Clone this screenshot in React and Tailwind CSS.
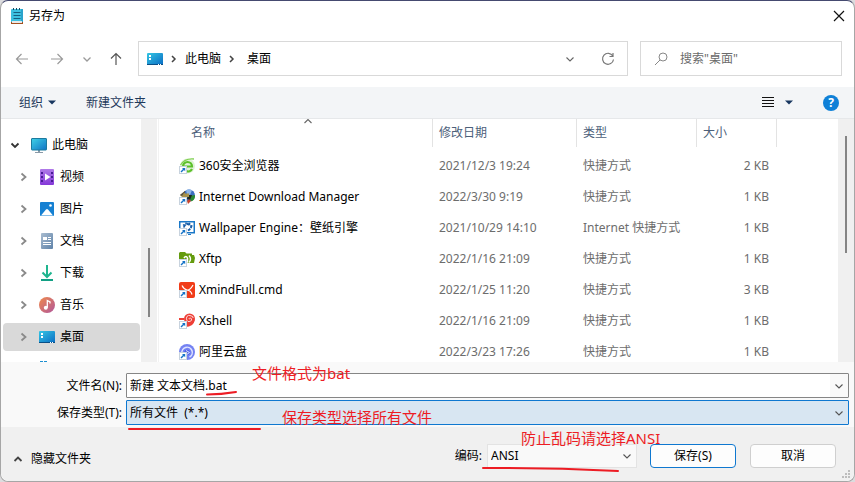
import React from "react";

function NotepadIcon() {
  return (
    <svg width="14" height="18" viewBox="0 0 14 18" aria-hidden="true">
      <rect x="1" y="2" width="12" height="14" rx="1" fill="#3cc0e0" />
      <rect x="11" y="2" width="2" height="14" fill="#2aa3cc" />
      <rect x="1" y="15" width="12" height="2" fill="#a4501e" />
      <rect x="2" y="14" width="10" height="2" fill="#e8e8e8" />
      <path d="M3.5 5.5h7M3.5 8.5h7M3.5 11.5h7" stroke="#155f80" />
      <path d="M3.5 1v2M6.5 1v2M9.5 1v2" stroke="#17485e" />
    </svg>
  );
}

function DesktopIcon() {
  return (
    <svg width="16" height="16" viewBox="0 0 16 16" aria-hidden="true">
      <defs>
        <linearGradient id="desk" x1="0" y1="0" x2="1" y2="1">
          <stop offset="0" stopColor="#35c6e3" />
          <stop offset="1" stopColor="#0a6cc4" />
        </linearGradient>
      </defs>
      <rect y="2" width="16" height="12" rx="1" fill="url(#desk)" />
      <rect y="13" width="16" height="1" fill="#0a4f86" />
      <path d="M2 4h2v2H2zM2 7h2v2H2z" fill="#fff" />
      <path d="M11 13h1v1h-1zM13 13h1v1h-1z" fill="#fff" />
    </svg>
  );
}

function ComputerIcon() {
  return (
    <svg width="16" height="16" viewBox="0 0 16 16" aria-hidden="true">
      <defs>
        <linearGradient id="pc" x1="0" y1="0" x2="1" y2="1">
          <stop offset="0" stopColor="#3fd2e6" />
          <stop offset="1" stopColor="#1173c5" />
        </linearGradient>
      </defs>
      <path d="M7 13h2v2H7zM4 15h8v1H4z" fill="#8a9aa8" />
      <rect x="0.5" y="1.5" width="15" height="11.5" rx="0.5" fill="url(#pc)" stroke="#1d7b9e" />
    </svg>
  );
}

function VideoIcon() {
  return (
    <svg width="16" height="16" viewBox="0 0 16 16" aria-hidden="true">
      <defs>
        <linearGradient id="vid" x1="0" y1="0" x2="0" y2="1">
          <stop offset="0" stopColor="#b07ae8" />
          <stop offset="1" stopColor="#8438d8" />
        </linearGradient>
      </defs>
      <rect x="1" width="14" height="16" rx="1" fill="url(#vid)" />
      <path d="M2 3h2v2H2zM2 7h2v2H2zM2 11h2v2H2zM12 3h2v2h-2zM12 7h2v2h-2zM12 11h2v2h-2z" fill="#4a1d96" />
      <path d="M6 4.500v7l5.500-3.500z" fill="#fff" />
    </svg>
  );
}

function PictureIcon() {
  return (
    <svg width="16" height="16" viewBox="0 0 16 16" aria-hidden="true">
      <rect x="1" y="1" width="14" height="14" rx="1" fill="#1580d2" />
      <path d="M2 14.500l5-6q1-1 2 0l5 6z" fill="#fff" />
      <circle cx="11.500" cy="4.500" r="1.300" fill="#fff" />
    </svg>
  );
}

function DocumentIcon() {
  return (
    <svg width="16" height="16" viewBox="0 0 16 16" aria-hidden="true">
      <defs>
        <linearGradient id="docg" x1="0" y1="0" x2="1" y2="1">
          <stop offset="0" stopColor="#a9bcd0" />
          <stop offset="1" stopColor="#5f83a9" />
        </linearGradient>
      </defs>
      <rect x="2" width="12" height="16" rx="1" fill="url(#docg)" />
      <path d="M4 4h4v3H4z" fill="#fff" />
      <path d="M9 4.500h3M9 6.500h3M4 9.500h8M4 11.500h8" stroke="#fff" />
    </svg>
  );
}

function DownloadIcon() {
  return (
    <svg width="16" height="16" viewBox="0 0 16 16" aria-hidden="true">
      <path d="M8 0v11.500M3.500 7.500l4.500 4.500 4.500-4.500" fill="none" stroke="#1fb58f" strokeWidth="2" />
      <path d="M2 15h12" stroke="#12a084" strokeWidth="2" />
    </svg>
  );
}

function MusicIcon() {
  return (
    <svg width="16" height="16" viewBox="0 0 16 16" aria-hidden="true">
      <defs>
        <linearGradient id="mus" x1="0" y1="0" x2="1" y2="1">
          <stop offset="0" stopColor="#f08a4b" />
          <stop offset="1" stopColor="#b0569c" />
        </linearGradient>
      </defs>
      <circle cx="8" cy="8" r="8" fill="url(#mus)" />
      <circle cx="6.800" cy="10.700" r="2" fill="#fff" />
      <path d="M8.300 10.700V3.500l2.700 1.500v1.500" fill="none" stroke="#fff" strokeWidth="1.300" />
    </svg>
  );
}

function ShortcutIcon({ children }) {
  return (
    <svg width="16" height="16" viewBox="0 0 16 16" className="shrink-0" aria-hidden="true">
      {children}
      <rect x="0.500" y="8.500" width="7" height="7" fill="#fff" stroke="#c8d3de" />
      <path d="M2 14l3-3" stroke="#1473c8" strokeWidth="1.400" />
      <path d="M3 10h3.200v3.200z" fill="#1473c8" />
    </svg>
  );
}

const shortcutArt = {
  browser: (
    <>
      <circle cx="8.500" cy="8" r="7.500" fill="#dff2d6" />
      <path d="M4 8.500h9a4.500 4.500 0 1 0-9 0M13 11a4.500 4.500 0 0 1-6 2" fill="none" stroke="#5cc02a" strokeWidth="2.200" />
      <path d="M1.500 7Q6 0 15 1" fill="none" stroke="#7fd050" strokeWidth="1.300" />
    </>
  ),
  idm: (
    <>
      <circle cx="10" cy="6.500" r="6" fill="#3a6fc0" />
      <path d="M7 1.200a6 6 0 0 1 6 0L11 6 8 5z" fill="#8fb6e6" />
      <path d="M10 7l5.900-1a6 6 0 0 1-4 6.500z" fill="#2b8a32" />
      <path d="M9 6h4l-2 5-3-1z" fill="#1d2a20" />
      <path d="M8 12l2-2 2 2-3 3z" fill="#c9452b" />
      <path d="M1 6l5-4v2.500h4V8H3z" fill="#a8924a" />
      <path d="M1 6l5-4v2H5L3 7z" fill="#5b5346" />
    </>
  ),
  wallpaper: (
    <>
      <rect x="0.750" y="1.750" width="14.500" height="11" fill="#fff" stroke="#1a78c8" strokeWidth="1.500" />
      <path d="M5 7.500a3.300 3.300 0 0 1 6-2l1.500.5-.5 1.500-1.500 2-1.500 1" fill="none" stroke="#1b5fa8" strokeWidth="1.900" strokeDasharray="3.500 .8" />
      <path d="M7 2.500v1.500M11 3l-1 1.500M4 4.500l1.500 1" stroke="#1b5fa8" strokeWidth="1.500" />
      <path d="M9 14.500h3" stroke="#1a78c8" />
    </>
  ),
  xftp: (
    <>
      <path d="M0 2l1-1h5l1.500 1.500H13v1.500h2l1 3-1 5H0z" fill="#649b0e" />
      <path d="M5 7q2-3 3.500 0v4H7" fill="none" stroke="#fff" strokeWidth="1.600" />
      <path d="M10 4.500q3 3.500 0 7" fill="none" stroke="#fff" strokeWidth="1.400" />
    </>
  ),
  xmind: (
    <>
      <rect width="16" height="16" rx="2" fill="#f13c18" />
      <path d="M3 3.500q2 4 5 4.500t6-5M8 8q4 .5 5 4.500M8 8q-2 1-3 3" fill="none" stroke="#fff" strokeWidth="1.200" />
    </>
  ),
  xshell: (
    <>
      <path d="M0 6h5" stroke="#ee3f36" strokeWidth="2" />
      <circle cx="10.500" cy="6" r="5.500" fill="#ee3f36" />
      <path d="M6 14q9 0 9.500-7l-3 2-4.500 2z" fill="#ee3f36" />
      <path d="M10.500 6.300q-.8-.8.200-1.300t1.800 1-1.500 2.400-3.200-1.200.2-3.800 4-.6 2 2.200" fill="none" stroke="#fff" strokeWidth=".8" />
    </>
  ),
  aliyun: (
    <>
      <circle cx="8" cy="8" r="8" fill="#7482f2" />
      <path d="M3 9.500a5.200 5.200 0 1 1 7.500 3.500" fill="none" stroke="#dfe3ff" strokeWidth="1.500" />
      <circle cx="8" cy="8.500" r="2.800" fill="#4d5fe6" />
      <path d="M7 6.500l3.500 2-3.500 2.500" fill="none" stroke="#dfe3ff" />
    </>
  ),
};

function Chevron({ dir, className = "", width = 2 }) {
  const paths = {
    right: "M3.500 1.500l4 3.500-4 3.500",
    down: "M1.500 3.500L5 7l3.500-3.500",
    up: "M1.500 7L5 3.500 8.500 7",
  };
  return (
    <svg width="10" height="10" viewBox="0 0 10 10" className={`shrink-0 ${className}`} fill="none" stroke="currentColor" strokeWidth={width} aria-hidden="true">
      <path d={paths[dir]} />
    </svg>
  );
}

function Crumb() {
  return (
    <svg width="6" height="10" viewBox="0 0 6 10" className="mx-2 shrink-0 text-[#444]" fill="none" stroke="currentColor" strokeWidth="1.500" aria-hidden="true">
      <path d="M1 2l3 3-3 3" />
    </svg>
  );
}

function Arrow({ d }) {
  return (
    <svg width="14" height="14" viewBox="0 0 14 14" fill="none" stroke="currentColor" strokeWidth="1.200" aria-hidden="true">
      <path d={d} />
    </svg>
  );
}

const folders = [
  { name: "视频", icon: <VideoIcon /> },
  { name: "图片", icon: <PictureIcon /> },
  { name: "文档", icon: <DocumentIcon /> },
  { name: "下载", icon: <DownloadIcon /> },
  { name: "音乐", icon: <MusicIcon /> },
  { name: "桌面", icon: <DesktopIcon />, active: true },
];

const files = [
  { name: "360安全浏览器", art: "browser", date: "2021/12/3 19:24", type: "快捷方式", size: "2 KB" },
  { name: "Internet Download Manager", art: "idm", date: "2022/3/30 9:19", type: "快捷方式", size: "1 KB" },
  { name: "Wallpaper Engine：壁纸引擎", art: "wallpaper", date: "2021/10/29 14:10", type: "Internet 快捷方式", size: "1 KB" },
  { name: "Xftp", art: "xftp", date: "2022/1/16 21:09", type: "快捷方式", size: "1 KB" },
  { name: "XmindFull.cmd", art: "xmind", date: "2022/1/25 11:20", type: "快捷方式", size: "3 KB" },
  { name: "Xshell", art: "xshell", date: "2022/1/16 21:09", type: "快捷方式", size: "1 KB" },
  { name: "阿里云盘", art: "aliyun", date: "2022/3/23 17:26", type: "快捷方式", size: "1 KB" },
];

function TitleBar() {
  return (
    <header className="flex h-[30px] shrink-0 items-center gap-[5px] pl-[9px] pr-2">
      <NotepadIcon />
      <h1 className="flex-1">另存为</h1>
      <button type="button" aria-label="关闭" className="p-px">
        <svg width="12" height="12" viewBox="0 0 12 12" stroke="#111" strokeWidth="1.200" aria-hidden="true">
          <path d="M1 1l10 10M11 1L1 11" />
        </svg>
      </button>
    </header>
  );
}

function NavBar() {
  return (
    <div className="flex shrink-0 gap-3 pb-[11px] pl-[14px] pr-3 pt-[10px]">
      <nav className="flex w-[111px] shrink-0 items-center text-[#9a9a9a]" aria-label="导航">
        <button type="button" aria-label="后退" className="mr-[21px]"><Arrow d="M13 7H1.500M6.500 2l-5 5 5 5" /></button>
        <button type="button" aria-label="前进" className="mr-[18px]"><Arrow d="M1 7h11.500M7.500 2l5 5-5 5" /></button>
        <button type="button" aria-label="最近位置" className="mr-[17px]"><Chevron dir="down" width={1.3} /></button>
        <button type="button" aria-label="上移" className="text-[#555]"><Arrow d="M7 13V1.500M2 6.500l5-5 5 5" /></button>
      </nav>
      <div className="flex h-[35px] flex-1 items-center border border-[#d9d9d9] px-2">
        <DesktopIcon />
        <Crumb />
        <a href="#pc">此电脑</a>
        <Crumb />
        <a href="#desktop" className="ml-1 flex-1">桌面</a>
        <button type="button" aria-label="历史" className="mr-[26px] text-[#666]"><Chevron dir="down" width={1.1} /></button>
        <button type="button" aria-label="刷新" className="mr-1 text-[#777]">
          <svg width="14" height="14" viewBox="0 0 14 14" fill="none" stroke="currentColor" strokeWidth="1.200" aria-hidden="true">
            <path d="M11.800 4A5.500 5.500 0 1 0 12.500 7.500M12 1v3.500H8.500" />
          </svg>
        </button>
      </div>
      <label className="flex h-[35px] w-[202px] shrink-0 items-center gap-3 border border-[#d9d9d9] px-[13px]">
        <svg width="14" height="14" viewBox="0 0 14 14" fill="none" stroke="#888" className="shrink-0" aria-hidden="true">
          <circle cx="9" cy="5" r="4" />
          <path d="M6 8l-5 5" />
        </svg>
        <input type="search" placeholder={'搜索"桌面"'} aria-label="搜索" className="w-full min-w-0 outline-none placeholder:text-[#6b6b6b]" />
      </label>
    </div>
  );
}

function Caret() {
  return (
    <svg width="8" height="5" viewBox="0 0 8 5" aria-hidden="true">
      <path d="M0 0.500h8L4 4.500z" fill="#17365f" />
    </svg>
  );
}

function Toolbar() {
  return (
    <div className="flex h-8 shrink-0 items-center border-b border-[#e6e8ea] bg-[#f3f5f7] pl-[18px] pr-[15px] text-[#1e395b]">
      <button type="button" className="flex items-center gap-[5px]">组织<Caret /></button>
      <button type="button" className="ml-[30px]">新建文件夹</button>
      <button type="button" aria-label="更改视图" className="ml-auto">
        <svg width="14" height="14" viewBox="0 0 14 14" stroke="#111" aria-hidden="true">
          <path d="M1 1.500h12M1 4.500h12M1 7.500h12M1 10.500h12" />
        </svg>
      </button>
      <button type="button" aria-label="更多选项" className="ml-[10px]"><Caret /></button>
      <button type="button" aria-label="帮助" className="ml-[30px] h-4 w-4 rounded-full bg-[#0f80d7] text-center text-xs font-bold leading-4 text-white">?</button>
    </div>
  );
}

function Sidebar() {
  return (
    <div className="flex w-[158px] shrink-0 border-r border-[#f2f2f2] pr-px">
      <ul className="flex min-w-0 flex-1 flex-col gap-1 overflow-hidden pl-[2px] pr-px pt-3">
        <li>
          <button type="button" aria-expanded="true" className="flex h-7 w-full items-center pl-[7px]">
            <Chevron dir="down" className="mr-[11px] text-[#333]" width={1.8} />
            <ComputerIcon />
            <span className="ml-[5px]">此电脑</span>
          </button>
        </li>
        {folders.map((f) => (
          <li key={f.name}>
            <button type="button" className={`flex h-7 w-full items-center rounded-sm pl-[15px] ${f.active ? "bg-[#d9d9d9]" : ""}`}>
              <Chevron dir="right" className="mr-[11px] text-[#8a8a8a]" width={1.8} />
              {f.icon}
              <span className="ml-[5px]">{f.name}</span>
            </button>
          </li>
        ))}
        <li className="flex h-7 shrink-0 justify-start pl-9 pt-[6px]">
          <svg width="16" height="16" viewBox="0 0 16 16" aria-hidden="true">
            <path d="M1 0h3v3H1zM5 0h3v3H5z" fill="#1d8fd0" />
          </svg>
        </li>
      </ul>
      <div className="w-4 shrink-0 bg-[#f0f0f0] pt-[129px]">
        <div className="mx-auto h-[69px] w-[2px] bg-[#858585]" />
      </div>
    </div>
  );
}

function HeadCell({ children, className = "" }) {
  return (
    <th scope="col" className="p-0 align-top font-normal">
      <div className={`relative flex h-7 items-center border-r border-[#e3e3e3] text-[#4c607a] ${className}`}>{children}</div>
    </th>
  );
}

function FileList() {
  return (
    <div className="flex min-w-0 flex-1">
      <div className="min-w-0 flex-1 overflow-hidden pl-5">
        <table className="w-[598px] table-fixed border-collapse text-left">
          <colgroup>
            <col className="w-[254px]" />
            <col className="w-36" />
            <col className="w-[120px]" />
            <col className="w-20" />
          </colgroup>
          <thead>
            <tr className="h-[31px]">
              <HeadCell className="pl-3">
                名称
                <Chevron dir="up" width={1.1} className="absolute left-1 right-0 top-[-3px] mx-auto text-[#666]" />
              </HeadCell>
              <HeadCell className="pl-[6px]">修改日期</HeadCell>
              <HeadCell className="pl-[6px]">类型</HeadCell>
              <HeadCell className="pl-[6px]">大小</HeadCell>
            </tr>
          </thead>
          <tbody>
            {files.map((f) => (
              <tr key={f.name} className="h-[31px] text-[#6d6d6d]">
                <td className="p-0 text-black">
                  <div className="flex items-center gap-1 whitespace-nowrap">
                    <ShortcutIcon>{shortcutArt[f.art]}</ShortcutIcon>
                    {f.name}
                  </div>
                </td>
                <td className="whitespace-nowrap py-0 pl-[6px] pr-0">{f.date}</td>
                <td className="whitespace-nowrap py-0 pl-[6px] pr-0">{f.type}</td>
                <td className="whitespace-nowrap py-0 pl-0 pr-2 text-right">{f.size}</td>
              </tr>
            ))}
          </tbody>
        </table>
      </div>
      <div className="w-4 shrink-0 bg-[#f0f0f0] pt-[17px]">
        <div className="mx-auto h-[117px] w-[2px] bg-[#858585]" />
      </div>
    </div>
  );
}

function FileFields() {
  return (
    <section className="relative z-10 flex shrink-0 flex-col gap-[2px] bg-[#f9f9f9] pb-[2px] pl-3 pr-[5px] pt-[11px]">
      <div className="flex h-[25px] items-center">
        <label htmlFor="filename" className="w-[109px] shrink-0 text-right">文件名(N):</label>
        <div className="ml-1 flex h-full flex-1 items-center rounded-[1px] border border-[#868686] bg-white">
          <input id="filename" type="text" defaultValue="新建 文本文档.bat" className="h-full min-w-0 flex-1 pb-px pl-[3px] outline-none" />
          <button type="button" aria-label="展开文件名" className="flex h-full w-[18px] items-center justify-center bg-[#f9f9f9] text-[#555]">
            <Chevron dir="down" width={1.1} />
          </button>
        </div>
      </div>
      <div className="flex h-[25px] items-center">
        <label htmlFor="filetype" className="w-[109px] shrink-0 text-right">保存类型(T):</label>
        <div className="ml-1 grid h-full flex-1 items-center rounded-[1px] border border-[#0f78d0] bg-[#d8e6f2]">
          <select id="filetype" className="col-start-1 row-start-1 h-full w-full appearance-none pl-[3px] outline-none">
            <option>{"所有文件\u00a0\u00a0(*.*)"}</option>
          </select>
          <Chevron dir="down" width={1.1} className="pointer-events-none col-start-1 row-start-1 mr-1 justify-self-end text-[#555]" />
        </div>
      </div>
      <p className="absolute left-[251px] top-0 text-[15px] leading-[22px] text-[#ed1c24]">文件格式为bat</p>
      <p className="absolute left-[281px] top-11 text-[15px] leading-[22px] text-[#ed1c24]">保存类型选择所有文件</p>
      <svg className="pointer-events-none absolute left-[127px] top-7" width="136" height="42" viewBox="0 0 136 42" fill="none" stroke="#ed1c24" strokeWidth="2" strokeLinecap="round" aria-hidden="true">
        <path d="M79 4.500q14 0 29-2.500M1 39h131" />
      </svg>
    </section>
  );
}

function Footer() {
  return (
    <footer className="relative flex flex-1 items-center rounded-b-lg bg-[#f0f0f0] pb-px pl-3 pr-[18px] pt-1">
      <button type="button" className="flex items-center gap-2 pt-[6px]">
        <Chevron dir="up" width={1.8} className="text-[#444]" />
        隐藏文件夹
      </button>
      <label htmlFor="encoding" className="ml-auto mr-[5px]">编码:</label>
      <div className="relative grid h-6 w-[150px] items-center border border-[#e3e3e3] bg-[#f9f9f9]">
        <select id="encoding" className="col-start-1 row-start-1 h-full w-full appearance-none pl-[3px] outline-none">
          <option>ANSI</option>
        </select>
        <Chevron dir="down" width={1.1} className="pointer-events-none col-start-1 row-start-1 mr-1 justify-self-end text-[#555]" />
        <p className="absolute bottom-[18px] left-[33px] whitespace-nowrap text-[15px] leading-[22px] text-[#ed1c24]">防止乱码请选择ANSI</p>
        <svg className="pointer-events-none absolute left-[-7px] top-5" width="142" height="8" viewBox="0 0 142 8" fill="none" stroke="#ed1c24" strokeWidth="2" strokeLinecap="round" aria-hidden="true">
          <path d="M2 3q66-.5 135 3" />
        </svg>
      </div>
      <button type="button" className="ml-[13px] h-6 w-[86px] rounded border border-[#0f78d0] bg-[#fdfdfd]">保存(S)</button>
      <button type="button" className="ml-[14px] h-6 w-[86px] rounded border border-[#cfcfcf] bg-[#fdfdfd]">取消</button>
      <svg className="absolute bottom-[2px] right-[3px]" width="9" height="9" viewBox="0 0 9 9" fill="#bdbdbd" aria-hidden="true">
        <path d="M6 0h2v2H6zM3 3h2v2H3zM6 3h2v2H6zM0 6h2v2H0zM3 6h2v2H3zM6 6h2v2H6z" />
      </svg>
    </footer>
  );
}

export default function App() {
  return (
    <div className="h-screen bg-[#dcdcde] font-['Noto_Sans','Noto_Sans_CJK_SC',sans-serif] text-xs text-black">
      <main className="flex h-full flex-col overflow-hidden rounded-lg border border-[#a6a6a6] border-t-[#454a70] bg-white">
        <TitleBar />
        <NavBar />
        <Toolbar />
        <div className="flex h-[243px] shrink-0">
          <Sidebar />
          <FileList />
        </div>
        <FileFields />
        <Footer />
      </main>
    </div>
  );
}
